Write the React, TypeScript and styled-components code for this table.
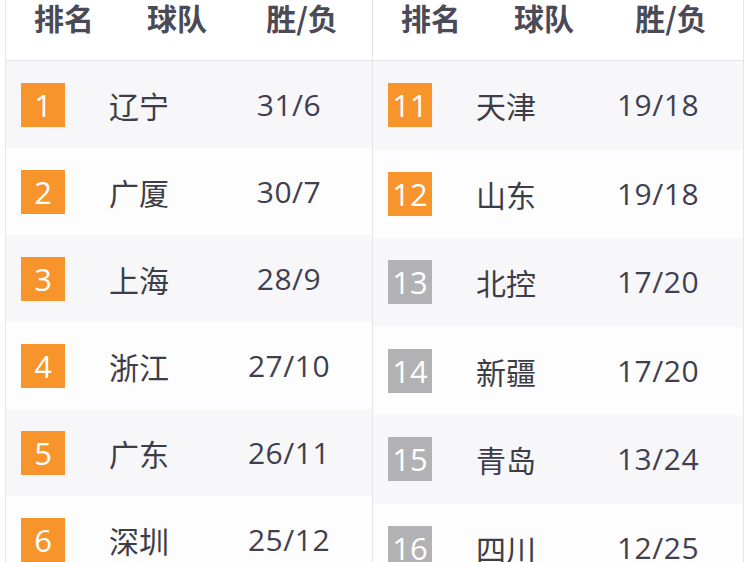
import React from 'react';
import styled, { createGlobalStyle } from 'styled-components';

const GlobalStyle = createGlobalStyle`
  html, body {
    margin: 0;
    padding: 0;
    background: #ffffff;
  }
  body {
    font-family: "Open Sans", "Noto Sans CJK SC", sans-serif;
    overflow: hidden;
  }
`;

interface Team {
  rank: number;
  name: string;
  record: string;
}

const leftTeams: Team[] = [
  { rank: 1, name: '辽宁', record: '31/6' },
  { rank: 2, name: '广厦', record: '30/7' },
  { rank: 3, name: '上海', record: '28/9' },
  { rank: 4, name: '浙江', record: '27/10' },
  { rank: 5, name: '广东', record: '26/11' },
  { rank: 6, name: '深圳', record: '25/12' },
];

const rightTeams: Team[] = [
  { rank: 11, name: '天津', record: '19/18' },
  { rank: 12, name: '山东', record: '19/18' },
  { rank: 13, name: '北控', record: '17/20' },
  { rank: 14, name: '新疆', record: '17/20' },
  { rank: 15, name: '青岛', record: '13/24' },
  { rank: 16, name: '四川', record: '12/25' },
];

const Page = styled.div`
  display: flex;
  padding-left: 5px;
  height: 562px;
  overflow: hidden;
`;

const Table = styled.div<{ $width: number; $last?: boolean }>`
  width: ${p => p.$width}px;
  flex: none;
  box-sizing: border-box;
  border-left: 1px solid #e6e6ea;
  ${p => (p.$last ? 'border-right: 1px solid #e6e6ea;' : '')}
`;

const HeaderRow = styled.div`
  display: grid;
  grid-template-columns: 116px 110px 1fr;
  height: 61px;
  box-sizing: border-box;
  border-bottom: 1px solid #e6e6ea;
  background: #ffffff;
`;

const HeaderCell = styled.div`
  text-align: center;
  font-family: "Noto Sans CJK SC", "Open Sans", sans-serif;
  font-weight: 700;
  font-size: 30px;
  line-height: 34px;
  color: #4b4b57;
`;

const Row = styled.div<{ $shaded: boolean; $height: number }>`
  display: grid;
  grid-template-columns: 88px 117px 1fr;
  align-items: center;
  height: ${p => p.$height}px;
  background: ${p => (p.$shaded ? '#f7f7f9' : '#fdfdfd')};
`;

const Badge = styled.div<{ $top: boolean }>`
  width: 44px;
  height: 44px;
  margin-left: 15px;
  background: ${p => (p.$top ? '#f7942c' : '#b2b2b4')};
  color: #ffffff;
  font-family: "Open Sans", sans-serif;
  font-weight: 500;
  font-size: 31px;
  line-height: 44px;
  text-align: center;
`;

const TeamName = styled.div`
  padding-left: 15px;
  font-family: "Noto Sans CJK SC", sans-serif;
  font-size: 30px;
  line-height: 40px;
  color: #3d3d48;
`;

const Record = styled.div`
  padding-right: 5px;
  text-align: center;
  font-family: "Open Sans", sans-serif;
  font-size: 30px;
  letter-spacing: 0.5px;
  line-height: 40px;
  color: #3f3f50;
`;

interface TableProps {
  teams: Team[];
  width: number;
  rowHeight: number;
  last?: boolean;
}

const Standings = ({ teams, width, rowHeight, last }: TableProps) => (
  <Table $width={width} $last={last}>
    <HeaderRow>
      <HeaderCell>排名</HeaderCell>
      <HeaderCell>球队</HeaderCell>
      <HeaderCell>胜/负</HeaderCell>
    </HeaderRow>
    {teams.map((t, i) => (
      <Row key={t.rank} $shaded={i % 2 === 0} $height={rowHeight}>
        <Badge $top={t.rank <= 12}>{t.rank}</Badge>
        <TeamName>{t.name}</TeamName>
        <Record>{t.record}</Record>
      </Row>
    ))}
  </Table>
);

export default function App() {
  return (
    <>
      <GlobalStyle />
      <Page>
        <Standings teams={leftTeams} width={367} rowHeight={87} />
        <Standings teams={rightTeams} width={372} rowHeight={88.5} last />
      </Page>
    </>
  );
}
